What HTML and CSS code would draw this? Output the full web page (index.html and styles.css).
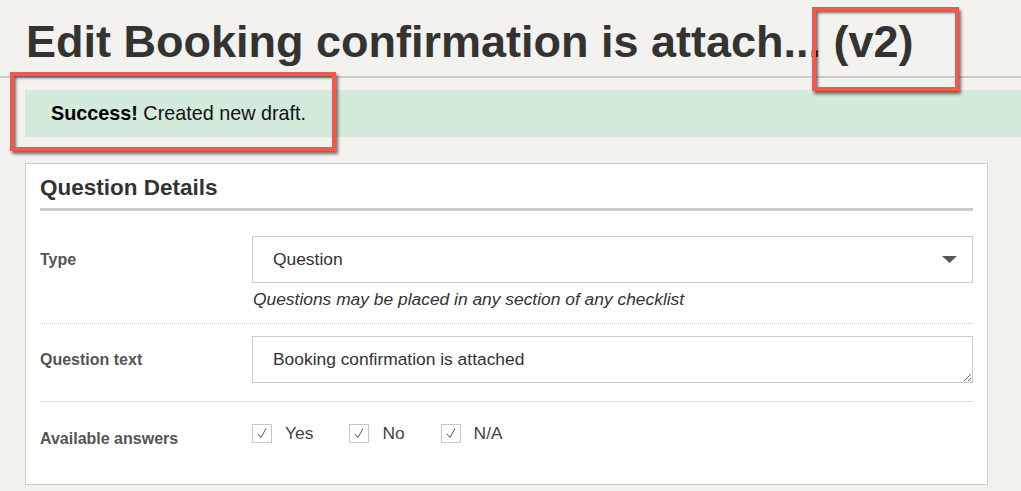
FILE: index.html
```html
<!DOCTYPE html>
<html>
<head>
<meta charset="utf-8">
<link rel="stylesheet" href="styles.css">
</head>
<body>
<div class="page">
  <h1 class="title">Edit Booking confirmation is attach... (v2)</h1>
  <div class="rule"></div>
  <div class="alert"><strong>Success!</strong> Created new draft.</div>

  <div class="card">
    <h2 class="card-title">Question Details</h2>

    <div class="row row-first">
      <div class="label">Type</div>
      <div class="field">
        <div class="select">
          <span>Question</span>
          <svg class="caret" width="15" height="7" viewBox="0 0 15 7"><polygon points="0,0 15,0 7.5,7" fill="#555"/></svg>
        </div>
        <div class="help">Questions may be placed in any section of any checklist</div>
      </div>
    </div>

    <div class="row row-mid">
      <div class="label">Question text</div>
      <div class="field">
        <textarea class="textarea" rows="1">Booking confirmation is attached</textarea>
      </div>
    </div>

    <div class="row row-last">
      <div class="label label-low">Available answers</div>
      <div class="field answers">
        <label class="answer"><span class="box"><svg width="12" height="12" viewBox="0 0 12 12"><polyline points="2,7 5,10.5 10,1.5" fill="none" stroke="#555" stroke-width="1"/></svg></span>Yes</label>
        <label class="answer"><span class="box"><svg width="12" height="12" viewBox="0 0 12 12"><polyline points="2,7 5,10.5 10,1.5" fill="none" stroke="#555" stroke-width="1"/></svg></span>No</label>
        <label class="answer"><span class="box"><svg width="12" height="12" viewBox="0 0 12 12"><polyline points="2,7 5,10.5 10,1.5" fill="none" stroke="#555" stroke-width="1"/></svg></span>N/A</label>
      </div>
    </div>
  </div>

  <div class="callout callout-alert"></div>
  <div class="callout callout-version"></div>
</div>
</body>
</html>
```

FILE: styles.css
```css
html, body {
  margin: 0;
  padding: 0;
  background: #f3f2ee;
  font-family: "Liberation Sans", Arial, sans-serif;
  color: #333;
  overflow: hidden;
}

.page {
  position: relative;
  height: 491px;
  padding-top: 17px;
  box-sizing: border-box;
}

.title {
  margin: 0 0 0 26px;
  font-size: 45px;
  line-height: 50px;
  font-weight: bold;
  color: #333;
  white-space: nowrap;
}

.rule {
  height: 2px;
  background: #cdcbc9;
  margin-top: 9px;
}

.alert {
  margin: 12px 0 0 25px;
  height: 47px;
  box-sizing: border-box;
  padding: 12px 26px;
  background: #d4eadb;
  color: #111;
  font-size: 19.8px;
  line-height: 22px;
}

.alert strong {
  color: #000;
}

.card {
  margin: 26px 0 0 25px;
  width: 963px;
  height: 322px;
  box-sizing: border-box;
  background: #fff;
  border: 1px solid #cfcfcf;
  padding: 11px 14px 0 14px;
}

.card-title {
  margin: 0;
  font-size: 22.5px;
  line-height: 26px;
  font-weight: bold;
  color: #333;
  padding-bottom: 7px;
  border-bottom: 3px solid #cccccc;
}

.row {
  display: grid;
  grid-template-columns: 212px 1fr;
  border-bottom: 1px dotted #c8c8c8;
}

.row-first {
  padding: 25px 0 14px 0;
}

.row-mid {
  padding: 12px 0 18px 0;
}

.row-last {
  border-bottom: none;
  padding: 21px 0 0 0;
}

.label {
  font-size: 16px;
  font-weight: bold;
  color: #555;
  padding-top: 15px;
  line-height: 18px;
}

.label-low {
  padding-top: 7px;
}

.select {
  height: 47px;
  box-sizing: border-box;
  border: 1px solid #cccccc;
  display: flex;
  align-items: center;
  justify-content: space-between;
  padding: 0 15px 0 20px;
  font-size: 17.4px;
  color: #333;
}

.caret {
  display: block;
}

.help {
  font-style: italic;
  font-size: 17.4px;
  line-height: 20px;
  margin: 6px 0 0 1px;
  color: #333;
}

.textarea {
  display: block;
  width: 100%;
  height: 47px;
  box-sizing: border-box;
  border: 1px solid #cccccc;
  border-radius: 0;
  padding: 12px 20px;
  font-family: "Liberation Sans", Arial, sans-serif;
  font-size: 17.4px;
  line-height: 20px;
  color: #333;
  resize: vertical;
  outline: none;
  overflow: hidden;
}

.answers {
  display: flex;
  align-items: center;
  height: 20px;
}

.answer {
  display: flex;
  align-items: center;
  font-size: 17.4px;
  color: #444;
  margin-right: 36px;
}

.box {
  width: 20px;
  height: 19px;
  box-sizing: border-box;
  border: 1px solid #c8c8c8;
  display: flex;
  align-items: center;
  justify-content: center;
  margin-right: 13px;
  background: #fff;
}

.box svg {
  display: block;
}

.callout {
  position: absolute;
  border: 4px solid #f4584c;
  box-sizing: border-box;
  box-shadow: 2px 3px 3px rgba(0, 0, 0, 0.55), inset 2px 2px 3px rgba(0, 0, 0, 0.55);
}

.callout-alert {
  left: 10px;
  top: 72px;
  width: 326px;
  height: 79px;
}

.callout-version {
  left: 812px;
  top: 7px;
  width: 147px;
  height: 84px;
}
```
